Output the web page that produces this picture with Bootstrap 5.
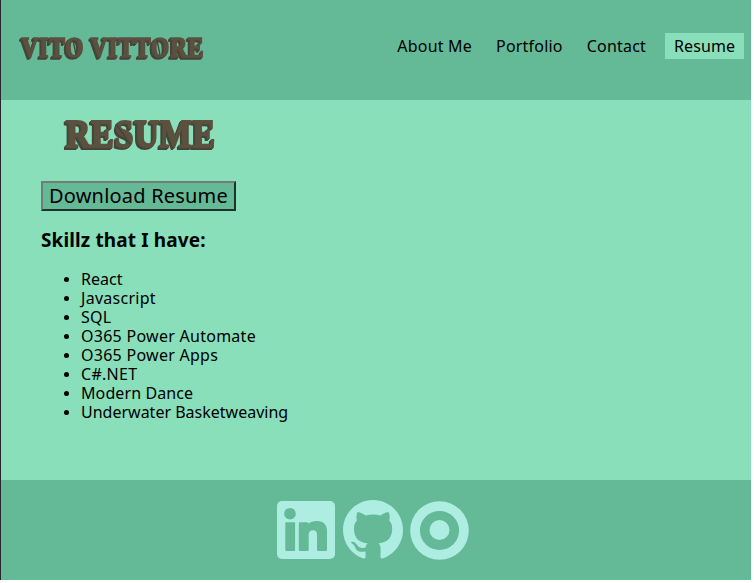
<!DOCTYPE html>
<html lang="en">
<head>
<meta charset="utf-8">
<meta name="viewport" content="width=device-width, initial-scale=1">
<title>Vito Vittore</title>
<link href="https://cdn.jsdelivr.net/npm/bootstrap@5.3.0/dist/css/bootstrap.min.css" rel="stylesheet">
<style>
body{background:#fff;color:#000;font-family:"Noto Sans","Open Sans",sans-serif;font-size:16px;overflow:hidden}
.page{width:751px;height:580px;border-left:1px solid #24282a;background:#88dfb9}
.band{background:#64b997;height:100px}
.brand-art{width:191px;height:32px;margin:33px 0 0 15px}
.site-nav{margin:33px 7px 0 0;gap:6px}
.site-nav .nav-link{color:#000;height:26px;line-height:26px;padding:0 9px;letter-spacing:.2px}
.site-nav .nav-link.active{background:#88dfb9;width:79px;letter-spacing:.1px;margin-left:4px}
.content{height:380px;padding-left:40px}
.title-art{width:162px;height:42px;margin:14px 0 0 18px}
.dl{height:30px;width:195px;margin-top:25px;background:#64b997;border:2px solid;border-color:#6f7f78 #23302b #23302b #6f7f78;border-radius:0;padding:0;font-size:20px;line-height:26px;color:#000;letter-spacing:.2px}
.skills-head{font-size:19px;line-height:24px;font-weight:700;margin:17px 0 18px;letter-spacing:.12px}
.skills{line-height:19px;padding-left:40px}
.skills li::marker{font-size:14px}
.wide{letter-spacing:.27px}
.semi{letter-spacing:.1px}
/* stencil lettering with an extruded lower-left edge */
.art-text{font-family:"Liberation Serif","Times New Roman",serif;font-weight:700;fill:#5a513f;stroke:#5a513f}
.relief{filter:drop-shadow(-.5px 1px 0 #46443a) drop-shadow(-.5px 1px 0 #46443a)}
.cuts{stroke:#46443a;fill:none}
.social{padding:20px 0 0 276px}
.social svg{fill:#aeeee2;display:block}
.social .hole{fill:#64b997}
</style>
</head>
<body>
<div class="page d-flex flex-column">
<header class="band d-flex justify-content-between align-items-start">
<svg class="brand-art" viewBox="0 0 191 32" role="img" aria-label="Vito Vittore">
<g class="relief"><text class="art-text" font-size="29" stroke-width="1.5" letter-spacing="1" x="5.500" y="24" textLength="183" lengthAdjust="spacingAndGlyphs">VITO VITTORE</text></g>
<g class="cuts" stroke-width="1.3"><path d="M57 7l3 15M141 7l3 15"/></g>
</svg>
<nav class="site-nav nav flex-nowrap">
<a class="nav-link" href="#">About Me</a>
<a class="nav-link" href="#">Portfolio</a>
<a class="nav-link" href="#">Contact</a>
<a class="nav-link active" href="#">Resume</a>
</nav>
</header>
<main class="content d-flex flex-column align-items-start">
<svg class="title-art flex-shrink-0" viewBox="0 0 162 42" role="img" aria-label="Resume">
<g class="relief"><text class="art-text" font-size="41" stroke-width="2" letter-spacing="1" x="7" y="33" textLength="150" lengthAdjust="spacingAndGlyphs">RESUME</text></g>
<g class="cuts" stroke-width="1.500"><path d="M57 10l14 20"/></g>
</svg>
<button class="btn dl" type="button">Download Resume</button>
<h3 class="skills-head">Skillz that I have:</h3>
<ul class="skills mb-0">
<li>React</li>
<li><span class="wide">Javascript</span></li>
<li><span class="wide">SQL</span></li>
<li><span class="wide">O365 Power Automate</span></li>
<li><span class="wide">O365 Power Apps</span></li>
<li><span class="wide">C#.NET</span></li>
<li><span class="semi">Modern Dance</span></li>
<li>Underwater Basketweaving</li>
</ul>
</main>
<footer class="band social d-flex align-items-start">
<svg width="58" height="60" viewBox="0 -1 58 60" role="img" aria-label="LinkedIn">
<rect width="58" height="58" rx="5"/>
<g class="hole"><circle cx="13" cy="12.7" r="5.8"/><rect x="8.3" y="21.3" width="9.8" height="28.7" rx="1"/>
<path d="M23 21.3h7q1.3 0 1.3 1.2v.3c2-2 5-2.800 8.500-2.800 7 0 10.200 4 10.200 10.300v18.500q0 1.200-1.200 1.200h-7.600q-1.200 0-1.200-1.200v-14.800c0-3.200-1.200-4.700-4-4.700s-4.300 1.500-4.300 4.700v14.800q0 1.200-1.200 1.200h-7.500q-1.200 0-1.200-1.200v-26.300q0-1.200 1.200-1.200z"/></g>
</svg>
<svg class="ms-2" width="60" height="60" viewBox="0 0 16 16" role="img" aria-label="GitHub">
<path d="M8 0C3.580 0 0 3.580 0 8c0 3.540 2.290 6.530 5.470 7.590.4.07.55-.17.55-.38 0-.19-.01-.82-.01-1.490-2.010.37-2.530-.49-2.690-.94-.09-.23-.48-.94-.82-1.130-.28-.15-.68-.52-.01-.53.63-.01 1.080.58 1.230.82.72 1.210 1.870.87 2.330.66.07-.52.28-.87.51-1.070-1.780-.2-3.640-.89-3.640-3.950 0-.87.31-1.590.82-2.150-.08-.2-.36-1.020.08-2.120 0 0 .67-.21 2.200.82.64-.18 1.320-.27 2-.27s1.360.09 2 .27c1.530-1.040 2.200-.82 2.200-.82.44 1.100.16 1.920.08 2.120.51.56.82 1.270.82 2.150 0 3.070-1.870 3.750-3.650 3.950.29.25.54.73.54 1.480 0 1.070-.01 1.930-.01 2.200 0 .21.15.46.55.38A8.010 8.010 0 0 0 16 8c0-4.420-3.580-8-8-8z"/>
</svg>
<svg width="74" height="61" viewBox="-7 -1 74 61" role="img" aria-label="Portfolio site">
<circle cx="29.500" cy="29.500" r="29.300"/><circle class="hole" cx="29.500" cy="29.500" r="19.600"/><circle cx="29.500" cy="29" r="10"/>
</svg>
</footer>
</div>
<script src="https://cdn.jsdelivr.net/npm/bootstrap@5.3.0/dist/js/bootstrap.bundle.min.js"></script>
</body>
</html>
